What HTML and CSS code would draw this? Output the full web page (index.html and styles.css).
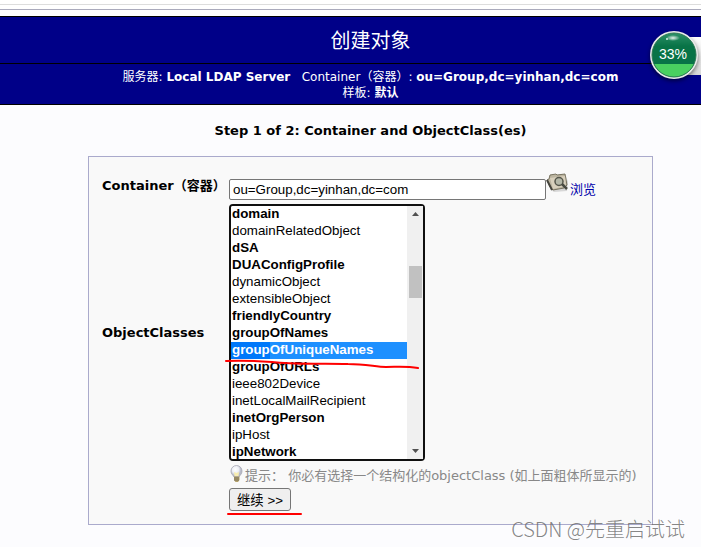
FILE: index.html
```html
<!DOCTYPE html>
<html lang="zh-CN">
<head>
<meta charset="utf-8">
<title>创建对象</title>
<link rel="stylesheet" href="styles.css">
</head>
<body>
<div class="topbar"></div>
<header class="banner">
  <h1 class="banner-title">创建对象</h1>
  <div class="banner-info">
    <div>服务器: <b>Local LDAP Server</b> &nbsp; Container<span class="cjk">（容器）</span>: <b>ou=Group,dc=yinhan,dc=com</b></div>
    <div>样板: <b>默认</b></div>
  </div>
  <div class="meter">
    <div class="meter-tab"></div>
    <svg class="meter-ball" viewBox="0 0 50 50" aria-hidden="true">
      <defs>
        <linearGradient id="dark" x1="0" y1="0" x2="0" y2="1"><stop offset="0" stop-color="#2c9068"/><stop offset=".3" stop-color="#087346"/><stop offset="1" stop-color="#087348"/></linearGradient>
        <radialGradient id="shine"><stop offset="0" stop-color="#fff" stop-opacity=".9"/><stop offset="1" stop-color="#fff" stop-opacity="0"/></radialGradient>
        <clipPath id="ball"><circle cx="25" cy="25" r="22"/></clipPath>
      </defs>
      <circle cx="25" cy="25" r="24" fill="#e9ecea"/>
      <circle cx="25" cy="25" r="22" fill="url(#dark)"/>
      <rect x="2" y="34" width="46" height="16" fill="#49cf60" clip-path="url(#ball)"/>
      <circle cx="25" cy="25" r="22" fill="none" stroke="#2b7854"/>
      <ellipse cx="24" cy="8" rx="7" ry="3" fill="url(#shine)"/>
      <circle cx="18" cy="9" r="1" fill="#d9eee4"/>
    </svg>
    <span class="meter-value">33%</span>
  </div>
</header>
<main class="page">
  <h2 class="step">Step 1 of 2: Container and ObjectClass(es)</h2>
  <form class="panel">
    <label class="label label-top" for="container">Container<span class="cjk">（容器）</span></label>
    <div class="container-row">
      <input class="text" id="container" type="text" value="ou=Group,dc=yinhan,dc=com">
      <a class="browse" href="#">
        <svg class="folder" viewBox="0 0 24 22" aria-hidden="true">
          <path d="M3 8l2 9 3 2 13-1 1-9-2-6-12 1z" fill="#999" opacity=".35"/>
          <path d="M1 7l2-1 1-4 6-1 1 1 8-1 2 11-3 3-11 2-3-3z" fill="#bcb5a0" stroke="#77725f"/>
          <path d="M4 5l15-2 1 10-13 3z" fill="#d8d0bc"/>
          <path d="M1 7l5 10" stroke="#45443c" stroke-width="2"/>
          <circle cx="13" cy="8.500" r="4" fill="#b5b8a8" stroke="#55564b" stroke-width="1.500"/>
          <path d="M16 11l5 5" stroke="#494b42" stroke-width="2.500"/>
        </svg>
        <span>浏览</span>
      </a>
    </div>
    <label class="label" for="classes">ObjectClasses</label>
    <div class="listbox">
      <select class="list" id="classes" size="15" multiple>
        <option class="structural">domain</option>
        <option>domainRelatedObject</option>
        <option class="structural">dSA</option>
        <option class="structural">DUAConfigProfile</option>
        <option>dynamicObject</option>
        <option>extensibleObject</option>
        <option class="structural">friendlyCountry</option>
        <option class="structural">groupOfNames</option>
        <option class="structural" selected>groupOfUniqueNames</option>
        <option class="structural">groupOfURLs</option>
        <option>ieee802Device</option>
        <option>inetLocalMailRecipient</option>
        <option class="structural">inetOrgPerson</option>
        <option>ipHost</option>
        <option class="structural">ipNetwork</option>
      </select>
      <div class="scrollbar" aria-hidden="true">
        <svg class="arrow" viewBox="0 0 16 16"><path d="M5 10h7L8.500 6z" fill="#505050"/></svg>
        <div class="thumb"></div>
        <svg class="arrow" viewBox="0 0 16 16"><path d="M5 6h7l-3.500 4z" fill="#505050"/></svg>
      </div>
      <svg class="mark mark-list" viewBox="0 0 198 12" aria-hidden="true"><path d="M2 2C18 1 34 2 48 3c24 3 48 1 76 2 18 0 28 3 38 3 11 0 20-1 32 1" fill="none" stroke="#f00" stroke-width="2" stroke-linecap="round"/></svg>
    </div>
    <div class="actions">
      <div class="hint">
        <svg class="bulb" viewBox="0 0 16 18" aria-hidden="true">
          <defs><radialGradient id="glass" cx=".4" cy=".35"><stop offset="0" stop-color="#fff"/><stop offset=".6" stop-color="#eef0f6"/><stop offset="1" stop-color="#b8bac8"/></radialGradient></defs>
          <path d="M5 12C4 10 2 9 2 6a5.500 5.500 0 0 1 11 0c0 3-2 4-3 6z" fill="url(#glass)" stroke="#a6a7b2" stroke-width=".8"/>
          <path d="M5.500 11l-.5-4 2.500 1L10 7l-.5 4" fill="#f8edb0"/>
          <path d="M5 11.500h5.500V15L9 17H6.500L5 15z" fill="#b6a26a"/>
          <path d="M5 13h5M5 15h5" stroke="#77705c"/>
        </svg>
        <span>提示： 你必有选择一个结构化的objectClass (如上面粗体所显示的)</span>
      </div>
      <button class="submit" type="submit">继续 &gt;&gt;</button>
      <svg class="mark mark-submit" viewBox="0 0 78 4" aria-hidden="true"><path d="M2 2H75" stroke="#f00" stroke-width="2" stroke-linecap="round"/></svg>
    </div>
  </form>
</main>
<div class="watermark">CSDN @先重启试试</div>
</body>
</html>
```
FILE: styles.css
```css
* { box-sizing: border-box; }

body {
  position: relative;
  min-height: 100vh;
  margin: 0;
  overflow: hidden;
  background: #fcfcfe;
  color: #000;
  font-family: "DejaVu Sans", "Noto Sans CJK SC", sans-serif;
  font-size: 13px;
}

.cjk { font-family: "Noto Sans CJK SC", sans-serif; }

.topbar {
  height: 16px;
  padding-top: 4px;
  background: #fff;
}

.topbar::before {
  content: "";
  display: block;
  height: 4px;
  border-top: 1px solid #ddd;
  border-bottom: 1px solid #aaaabc;
}

.banner {
  position: relative;
  border: solid #000;
  border-width: 1px 0;
  background: #000088;
  color: #fff;
  text-align: center;
}

.banner-title {
  margin: 0;
  padding: 2px 0 0 40px;
  border-bottom: 1px solid #000;
  font-size: 20px;
  font-weight: 400;
  line-height: 44px;
}

.banner-info {
  padding: 4px 0 3px 40px;
  font-size: 12px;
  line-height: 16px;
}

.meter {
  position: absolute;
  top: 13px;
  right: 0;
  width: 52px;
  height: 50px;
}

.meter-tab {
  position: absolute;
  top: 7px;
  right: 0;
  width: 16px;
  height: 38px;
  background: linear-gradient(#fff, #d8d8d8);
}

.meter-ball {
  position: absolute;
  top: 0;
  left: 0;
  width: 50px;
  height: 50px;
  filter: drop-shadow(0 2px 2px #0008);
}

.meter-value {
  position: absolute;
  inset: 0 4px 0 0;
  font: 14px/48px "Liberation Sans", sans-serif;
}

.page { padding-left: 40px; }

.step {
  margin: 0;
  font-size: 13px;
  line-height: 51px;
  text-align: center;
}

.panel {
  display: grid;
  grid-template-columns: 127px 1fr;
  align-items: center;
  row-gap: 4px;
  max-width: 565px;
  margin: 0 auto;
  padding: 14px 13px 13px;
  border: 1px solid #aaaacc;
  background: #f9f9f9;
}

.label { font-weight: 700; white-space: nowrap; }

.label-top { align-self: start; line-height: 28px; }

.container-row { display: flex; align-items: flex-end; height: 29px; }

.text {
  width: 317px;
  height: 21px;
  padding: 1px 3px;
  border: 1px solid #767676;
  border-radius: 2px;
  font-family: "Liberation Sans", sans-serif;
}

.browse {
  display: flex;
  align-items: flex-end;
  color: #0000aa;
  line-height: 20px;
  text-decoration: none;
}

.folder { width: 24px; height: 22px; margin-bottom: 5px; fill: none; }

.listbox {
  position: relative;
  display: flex;
  width: 196px;
  height: 257px;
  border: 2px solid #101010;
  border-radius: 4px;
  background: #fff;
}

.list {
  flex: 1;
  height: 100%;
  padding: 0;
  overflow: hidden;
  border: 0;
  outline: 0;
  background: #fff;
  color: #000;
  font-family: "Liberation Sans", sans-serif;
  scrollbar-width: none;
}

.list option { height: 17px; padding: 0 1px 1px; line-height: 16px; }

.structural { font-weight: 700; }

.list option:checked {
  background: linear-gradient(90deg, #0078fa 39px, #1e90ff 39px);
  -webkit-text-fill-color: #fff;
}

.scrollbar {
  display: flex;
  flex-direction: column;
  align-items: center;
  width: 16px;
  background: #f0f0f0;
}

.arrow { width: 16px; height: 16px; }

.thumb { width: 13px; height: 32px; margin: 44px 0 auto; background: #c1c1c1; }

.mark { position: absolute; pointer-events: none; }

.mark-list { top: 153px; left: -7px; width: 198px; height: 12px; }

.actions { grid-column: 2; position: relative; }

.hint {
  display: flex;
  align-items: center;
  margin-bottom: 1px;
  color: #888;
  line-height: 22px;
  white-space: nowrap;
}

.bulb { width: 16px; height: 18px; margin-bottom: 4px; }

.submit {
  display: block;
  width: 62px;
  height: 23px;
  padding: 0;
  border: 1px solid #767676;
  border-radius: 3px;
  background: #efefef;
  color: #000;
  font-family: "Liberation Sans", "Noto Sans CJK SC", sans-serif;
}

.mark-submit { bottom: -5px; left: -3px; width: 78px; height: 4px; }

.watermark {
  position: absolute;
  right: 16px;
  bottom: 5px;
  color: #666c;
  font: 300 20px/26px "Noto Sans CJK SC", sans-serif;
}
```
